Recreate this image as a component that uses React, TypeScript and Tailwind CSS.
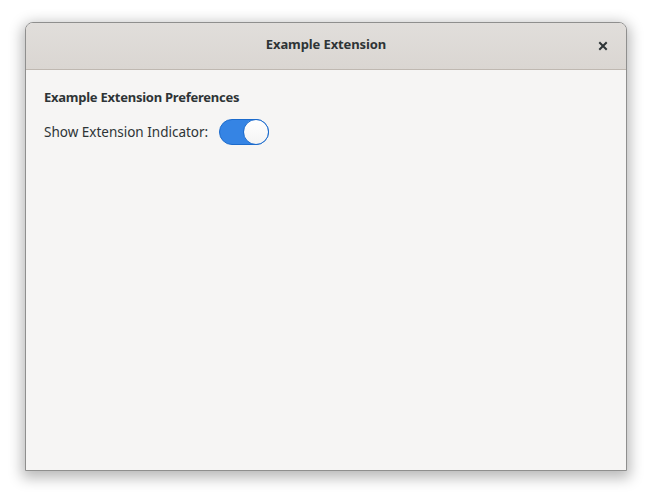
import React from "react";

export default function App() {
  return (
    <div className="w-[652px] h-[499px] bg-white pt-[22px] pl-[25px]" style={{ fontFamily: '"Noto Sans", sans-serif' }}>
      <div className="w-[602px] h-[449px] flex flex-col rounded-t-[8px] border border-[#8f8f8e] bg-[#f6f5f4] shadow-[0_4px_14px_3px_rgba(0,0,0,0.28)] overflow-hidden">
        <div className="h-[47px] shrink-0 flex items-center justify-center relative bg-gradient-to-b from-[#e1dedb] to-[#dad6d2] border-b border-[#bfb8b1]">
          <span className="text-[13px] font-bold tracking-[-0.1px] text-[#2e3436] -mt-[2px]">Example Extension</span>
          <div className="absolute right-[18px] top-[18px] w-[10px] h-[10px]">
            <svg width="10" height="10" viewBox="0 0 10 10">
              <path d="M2 2 L8 8 M8 2 L2 8" stroke="#2e3436" strokeWidth="2" strokeLinecap="square" />
            </svg>
          </div>
        </div>
        <div className="flex-1 px-[18px] pt-[18px] text-[#2e3436]">
          <div className="text-[13px] font-bold tracking-[-0.25px] leading-[18px]">Example Extension Preferences</div>
          <div className="mt-[13px] flex items-center gap-[11px]">
            <span className="text-[13.5px] leading-[18px]">Show Extension Indicator:</span>
            <div className="w-[50px] h-[26px] rounded-full bg-[#3584e4] border border-[#1c6bcc] relative">
              <div className="absolute right-[-1px] top-[-1px] w-[26px] h-[26px] rounded-full bg-gradient-to-b from-white to-[#f4f4f4] border border-[#1c6bcc]"></div>
            </div>
          </div>
        </div>
      </div>
    </div>
  );
}
